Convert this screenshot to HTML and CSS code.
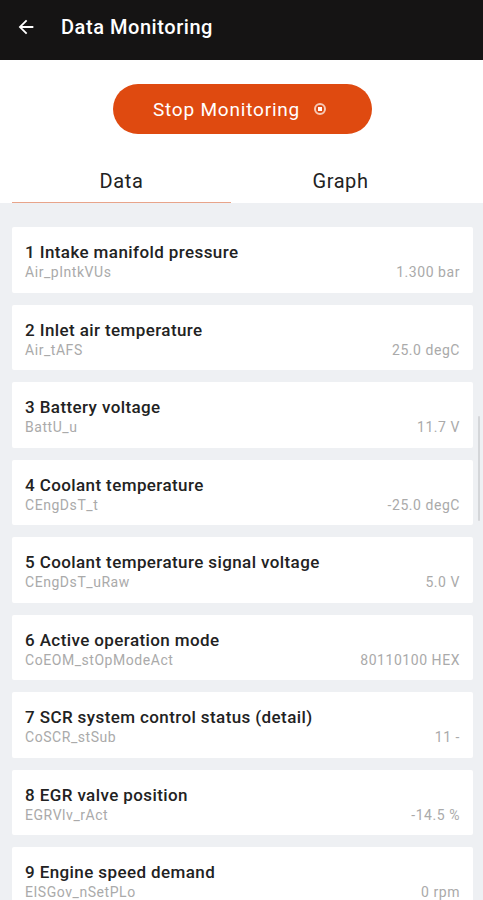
FILE: index.html
```html
<!DOCTYPE html>
<html dir="ltr" lang="en">
<head>
	<meta charset="UTF-8">
	<meta name="viewport" content="width=device-width">
	<title>Data Monitoring</title>
	<link rel="stylesheet" href="styles.css">
</head>
<body>
<div class="topbar">
	<svg class="back" width="22" height="22" viewBox="0 0 24 24"><path d="M20 11H7.83l5.59-5.59L12 4l-8 8 8 8 1.41-1.41L7.83 13H20v-2z" fill="#fff"/></svg>
	<span class="title">Data Monitoring</span>
</div>

<div class="action">
	<button class="stop">Stop Monitoring <span class="dot"></span></button>
</div>

<div class="tabs">
	<div class="tab active">Data</div>
	<div class="tab">Graph</div>
</div>

<div class="list">
	<div class="item"><div class="name">1 Intake manifold pressure</div><div class="info"><span>Air_pIntkVUs</span><span>1.300 bar</span></div></div>
	<div class="item"><div class="name">2 Inlet air temperature</div><div class="info"><span>Air_tAFS</span><span>25.0 degC</span></div></div>
	<div class="item"><div class="name">3 Battery voltage</div><div class="info"><span>BattU_u</span><span>11.7 V</span></div></div>
	<div class="item"><div class="name">4 Coolant temperature</div><div class="info"><span>CEngDsT_t</span><span>-25.0 degC</span></div></div>
	<div class="item"><div class="name">5 Coolant temperature signal voltage</div><div class="info"><span>CEngDsT_uRaw</span><span>5.0 V</span></div></div>
	<div class="item"><div class="name">6 Active operation mode</div><div class="info"><span>CoEOM_stOpModeAct</span><span>80110100 HEX</span></div></div>
	<div class="item"><div class="name">7 SCR system control status (detail)</div><div class="info"><span>CoSCR_stSub</span><span>11 -</span></div></div>
	<div class="item"><div class="name">8 EGR valve position</div><div class="info"><span>EGRVlv_rAct</span><span>-14.5 %</span></div></div>
	<div class="item"><div class="name">9 Engine speed demand</div><div class="info"><span>EISGov_nSetPLo</span><span>0 rpm</span></div></div>
	<div class="scroll"></div>
</div>
</body>
</html>
```

FILE: styles.css
```css
html, body { margin: 0; padding: 0; }

body {
	font-family: Roboto, "Liberation Sans", sans-serif;
	background: #fff;
	width: 483px;
	height: 900px;
	overflow: hidden;
}

.topbar {
	height: 60px;
	background: #151414;
	display: flex;
	align-items: center;
	padding-left: 15px;
	padding-bottom: 6px;
	box-sizing: border-box;
}

.back { margin-right: 24px; }

.title {
	color: #fff;
	font-size: 20px;
	font-weight: 500;
	letter-spacing: 0.55px;
}

.action {
	padding-top: 24px;
	display: flex;
	justify-content: center;
}

.stop {
	width: 259px;
	height: 50px;
	border: none;
	border-radius: 25px;
	background: #df4a10;
	color: #fff;
	font-family: inherit;
	font-size: 19px;
	letter-spacing: 0.8px;
	display: flex;
	align-items: center;
	justify-content: center;
	gap: 14px;
	padding: 0 5px 0 0;
	margin-left: 1px;
}

.dot {
	border: 2px solid #f6c9b6;
	border-radius: 50%;
	box-sizing: border-box;
	position: relative;
	width: 12px;
	height: 12px;
}

.dot::after {
	content: "";
	position: absolute;
	left: 2px;
	top: 2px;
	width: 4px;
	height: 4px;
	background: #fff;
}

.tabs {
	display: flex;
	margin: 19px 12px 0 12px;
	height: 50px;
}

.tab {
	width: 219px;
	text-align: center;
	font-size: 20px;
	letter-spacing: 0.6px;
	color: #222;
	line-height: 56px;
	height: 49px;
}

.tab.active {
	border-bottom: 1px solid #e8a48a;
}

.list {
	background: #eef0f3;
	padding: 24px 10px 10px 12px;
	position: relative;
}

.item {
	background: #fff;
	height: 65.5px;
	margin-bottom: 12px;
	border-radius: 2px;
	padding: 14px 13px 0 13px;
	box-sizing: border-box;
}

.name {
	font-size: 17px;
	font-weight: 500;
	letter-spacing: 0.4px;
	color: #222;
	line-height: 22px;
}

.info {
	display: flex;
	justify-content: space-between;
	font-size: 14px;
	letter-spacing: 0.55px;
	color: #aaa;
	line-height: 18px;
}

.scroll {
	position: absolute;
	right: 3px;
	top: 213px;
	width: 2px;
	height: 105px;
	background: #d4d6d9;
	border-radius: 1px;
}
```
